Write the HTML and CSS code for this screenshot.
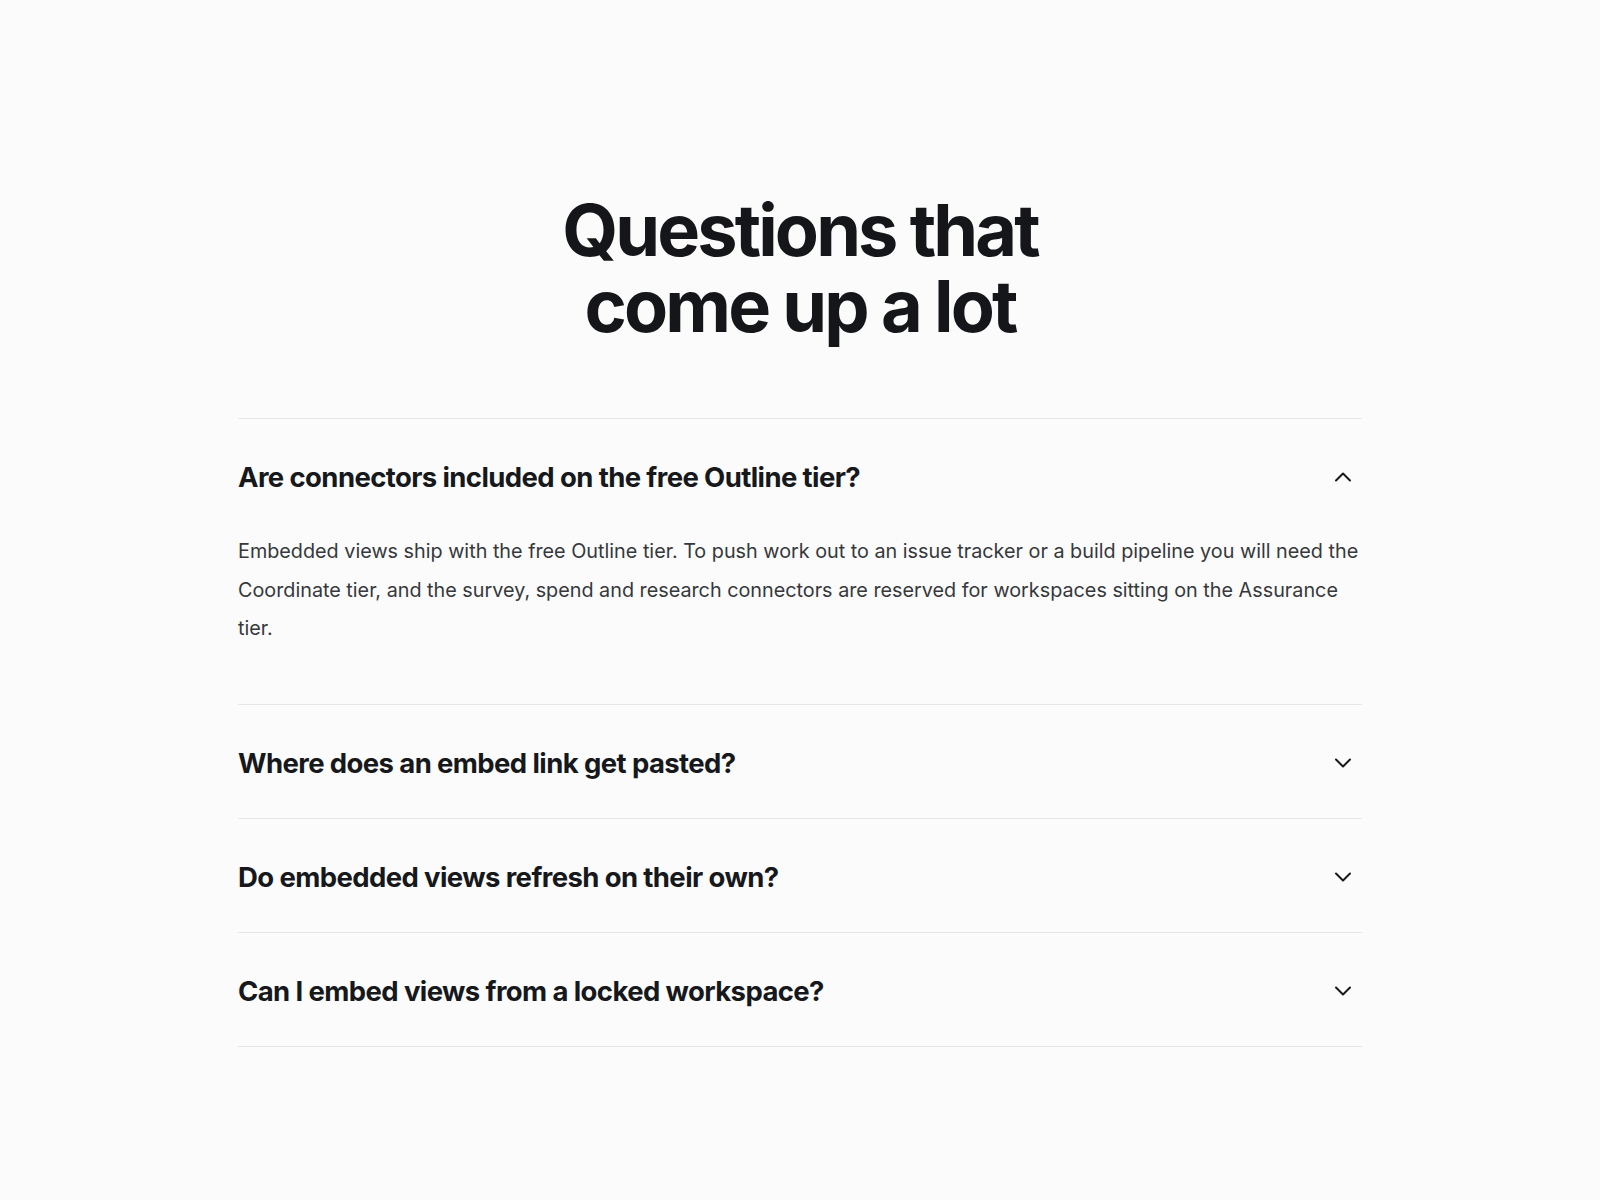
FILE: index.html
```html
<!DOCTYPE html>
<html lang="en">
<head>
<meta charset="utf-8">
<title>FAQ</title>
<link rel="stylesheet" href="styles.css">
</head>
<body>
<main class="faq">
  <h1 class="faq-title"><span class="faq-title-line">Questions that</span><span class="faq-title-line">come up a lot</span></h1>
  <div class="faq-list">
    <div class="faq-item open">
      <button class="faq-q" type="button">
        <span class="faq-q-text">Are connectors included on the free Outline tier?</span>
        <span class="faq-icon"><svg viewBox="0 0 24 24" width="24" height="24"><polyline points="5,15.5 12,8.5 19,15.5"/></svg></span>
      </button>
      <div class="faq-a">
        <p>Embedded views ship with the free Outline tier. To push work out to an issue tracker or a build pipeline you will need the Coordinate tier, and the survey, spend and research connectors are reserved for workspaces sitting on the Assurance tier.</p>
      </div>
    </div>
    <div class="faq-item">
      <button class="faq-q" type="button">
        <span class="faq-q-text">Where does an embed link get pasted?</span>
        <span class="faq-icon"><svg viewBox="0 0 24 24" width="24" height="24"><polyline points="5,8.5 12,15.5 19,8.5"/></svg></span>
      </button>
    </div>
    <div class="faq-item">
      <button class="faq-q" type="button">
        <span class="faq-q-text">Do embedded views refresh on their own?</span>
        <span class="faq-icon"><svg viewBox="0 0 24 24" width="24" height="24"><polyline points="5,8.5 12,15.5 19,8.5"/></svg></span>
      </button>
    </div>
    <div class="faq-item">
      <button class="faq-q" type="button">
        <span class="faq-q-text">Can I embed views from a locked workspace?</span>
        <span class="faq-icon"><svg viewBox="0 0 24 24" width="24" height="24"><polyline points="5,8.5 12,15.5 19,8.5"/></svg></span>
      </button>
    </div>
  </div>
</main>
</body>
</html>
```

FILE: styles.css
```css
* { box-sizing: border-box; }
html, body {
  margin: 0;
  padding: 0;
  background: #fbfbfb;
}
body {
  font-family: Inter, "Noto Sans", sans-serif;
  color: #16181b;
}
.faq {
  max-width: 1124px;
  margin: 0 auto;
  padding: 192px 0 140px;
}
.faq-title {
  margin: 0 0 74px;
  text-align: center;
  font-size: 72px;
  line-height: 76px;
  font-weight: 700;
  letter-spacing: -0.04em;
  color: #141619;
}
.faq-title-line {
  display: block;
}
.faq-list {
  border-top: 1px solid #e6e6e6;
}
.faq-item {
  border-bottom: 1px solid #e6e6e6;
}
.faq-q {
  display: flex;
  align-items: center;
  justify-content: space-between;
  width: 100%;
  padding: 40px 0 37px;
  margin: 0;
  border: 0;
  background: transparent;
  font: inherit;
  color: inherit;
  text-align: left;
  cursor: pointer;
}
.faq-q-text {
  font-size: 27.5px;
  line-height: 36px;
  font-weight: 700;
  letter-spacing: -0.022em;
  color: #16181b;
}
.faq-icon {
  width: 38px;
  height: 36px;
  display: flex;
  align-items: center;
  justify-content: center;
}
.faq-icon svg {
  fill: none;
  stroke: #16181b;
  stroke-width: 2;
  stroke-linecap: round;
  stroke-linejoin: round;
}
.faq-a {
  padding: 0 0 56px;
}
.faq-a p {
  margin: 0;
  font-size: 19.8px;
  line-height: 38.5px;
  color: #36383b;
}
```
